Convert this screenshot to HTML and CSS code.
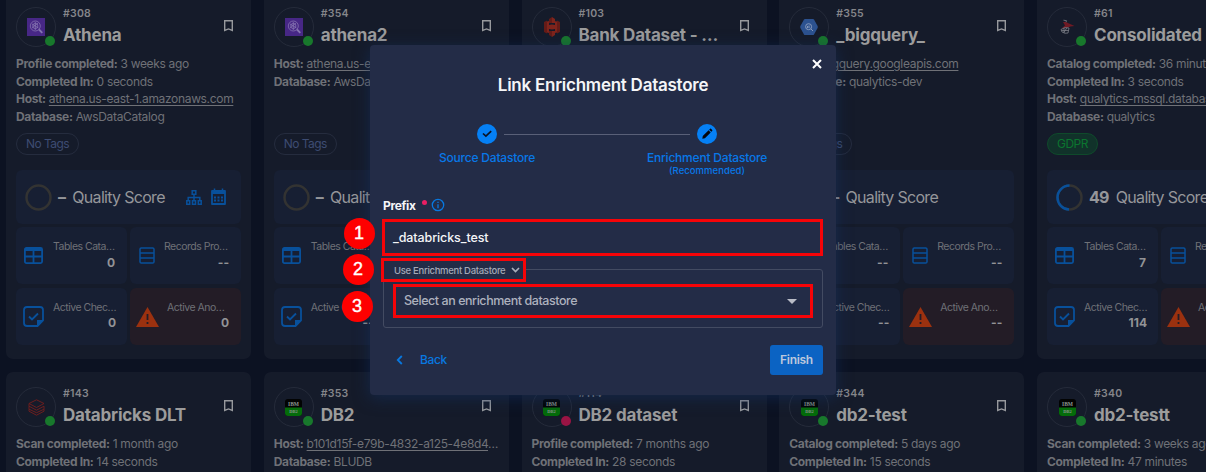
FILE: index.html
```html
<!DOCTYPE html>
<html lang="en">
<head>
<meta charset="utf-8">
<title>Datastores</title>
<link rel="stylesheet" href="styles.css">
</head>
<body>
<main class="grid" id="grid"></main>

<section class="modal" role="dialog">
  <svg class="close" viewBox="0 0 10 10"><path d="M1 1l8 8M9 1l-8 8"/></svg>
  <h2 class="modal-title">Link Enrichment Datastore</h2>
  <div class="stepper">
    <div class="step">
      <svg class="step-dot" viewBox="0 0 20 20"><circle cx="10" cy="10" r="10" fill="#0580f5"/><path d="M6 9.500l2.900 2.700 5.300-5" fill="none" stroke="#0c1222" stroke-width="1.700"/></svg>
      <span class="step-label">Source Datastore</span>
    </div>
    <div class="step-line"></div>
    <div class="step">
      <svg class="step-dot" viewBox="0 0 20 20"><circle cx="10" cy="10" r="10" fill="#0580f5"/><path d="M5.300 14.700l.5-2.600 5.800-5.800 2.100 2.100-5.800 5.800zM12.200 5.700l.9-.9q.5-.4.9 0l1.200 1.200q.4.400 0 .9l-.9.900z" fill="#05070d"/></svg>
      <span class="step-label">Enrichment Datastore</span>
      <span class="step-sub">(Recommended)</span>
    </div>
  </div>
  <div class="field-label"><span>Prefix</span><i class="required"></i>
    <svg class="info" viewBox="0 0 14 14"><circle cx="7" cy="7" r="5.700" fill="none" stroke="#0878e0" stroke-width="1.300"/><path d="M7 6.200v4M7 3.800v1.300" stroke="#0878e0" stroke-width="1.300"/></svg>
  </div>
  <div class="input">_databricks_test</div>
  <div class="fieldset">
    <div class="legend"><span>Use Enrichment Datastore</span><svg class="chev" viewBox="0 0 9 6"><path d="M1 1l3.500 3.500L8 1"/></svg></div>
    <div class="select"><span>Select an enrichment datastore</span><svg class="caret" viewBox="0 0 10 5"><path d="M0 0h10L5 5z"/></svg></div>
  </div>
  <div class="footer">
    <div class="back"><svg class="back-icon" viewBox="0 0 7 10"><path d="M5.800 1L1.800 5l4 4"/></svg><span>Back</span></div>
    <div class="finish">Finish</div>
  </div>
</section>

<div class="callout callout-1">1</div>
<div class="callout callout-2">2</div>
<div class="callout callout-3">3</div>
<script src="cards.js"></script>
</body>
</html>
```
FILE: styles.css
```css
* { box-sizing: border-box; }
html { overflow: hidden; }
body {
  margin: 0;
  width: 1206px;
  height: 472px;
  overflow: hidden;
  background: #0c1222;
  font-family: Inter, "Liberation Sans", sans-serif;
  position: relative;
}
svg { display: block; flex: none; }

.grid {
  display: grid;
  grid-template-columns: repeat(5, 245px);
  grid-auto-rows: 367px;
  gap: 13px 12.75px;
  margin: -8px 0 0 6px;
}
.card {
  background: #151b2a;
  border-radius: 7px;
  padding: 15px 10px;
  color: #6f7177;
  white-space: nowrap;
  overflow: hidden;
}
.head { display: flex; height: 40px; }
.avatar {
  position: relative;
  flex: none;
  width: 40px;
  height: 40px;
  border: 1px solid #252b3a;
  border-radius: 50%;
  display: grid;
  place-items: center;
}
.dot {
  position: absolute;
  left: 28px;
  top: 28px;
  width: 10px;
  height: 10px;
  border-radius: 50%;
  background: #18782c;
}
.dot-red { background: #9a1444; }
.names { margin-left: 7px; flex: 1; }
.num { font-size: 10.5px; line-height: 13px; font-weight: 600; color: #85868a; letter-spacing: 0.25px; }
.name { font-size: 17px; line-height: 22px; margin-top: 4px; font-weight: 700; color: #9c9c9c; letter-spacing: -0.2px; }
.bookmark { margin: 13px 8px 0 0; width: 9px; height: 12px; fill: none; stroke: #97999d; stroke-width: 1.4; }
.details {
  height: 78px;
  margin-top: 8px;
  font-size: 12px;
  line-height: 17.7px;
  letter-spacing: -0.33px;
}
.details b { font-weight: 700; }
.details a { text-decoration: underline; text-underline-offset: 2px; }
.tag {
  display: inline-block;
  height: 22px;
  line-height: 20px;
  padding: 0 9px;
  border: 1px solid #252c3e;
  border-radius: 11px;
  font-size: 12px;
  letter-spacing: -0.55px;
  color: #3d4c72;
  vertical-align: top;
}
.tag-green { background: #11322a; border-color: #0f4a2b; color: #0b752f; }
.score {
  display: flex;
  align-items: center;
  height: 54px;
  margin-top: 15px;
  padding: 0 15px 0 9px;
  border-radius: 6px;
  background: #171f33;
  color: #95969a;
  font-size: 16px;
  letter-spacing: -0.7px;
}
.ring { width: 27px; height: 27px; margin-right: 6px; }
.score-value { margin-right: 7px; font-weight: 700; }
.score-text { flex: 1; }
.tree { width: 16px; height: 15px; margin: 1px 9px 0 0; }
.cal { width: 15px; height: 17px; margin-bottom: 2px; }
.metrics {
  display: grid;
  grid-template-columns: 111px 111px;
  grid-auto-rows: 57px;
  gap: 4px 3px;
  margin-top: 3px;
}
.metric {
  display: flex;
  align-items: center;
  border-radius: 6px;
  background: #171f33;
  padding: 0 12px 0 7px;
}
.metric:first-child { padding-left: 8px; }
.metric-warn { background: #231c26; padding-left: 6px; }
.metric-records { padding-left: 9px; }
.metric-text { flex: 1; height: 57px; padding-top: 12px; }
.metric-label { font-size: 10.5px; line-height: 16px; letter-spacing: -0.5px; padding-left: 9px; }
.metric:first-child .metric-label { padding-left: 10px; }
.metric-warn .metric-label { padding-left: 8px; }
.metric-value { font-size: 12px; line-height: 16px; font-weight: 700; text-align: right; color: #929396; }
.metric:nth-child(n+3) .metric-value { margin-top: -1px; }
.blue { fill: none; stroke: #08509b; }

.modal {
  position: absolute;
  left: 370px;
  top: 45px;
  width: 466px;
  height: 350px;
  padding: 30px 13px 0;
  border-radius: 4px;
  background: #232c47;
  box-shadow: 0 3px 16px rgba(20, 48, 95, 0.6);
  color: #f4f5f7;
  white-space: nowrap;
}
.close { position: absolute; left: 442px; top: 14px; width: 10px; height: 10px; stroke: #fff; stroke-width: 2; }
.modal-title { margin: 0; font-size: 17px; line-height: 20px; font-weight: 600; text-align: center; letter-spacing: -0.25px; }
.stepper { display: flex; height: 74px; padding: 29px 0 0 94px; }
.step { width: 20px; display: flex; flex-direction: column; align-items: center; color: #0878e8; }
.step-dot { width: 20px; height: 20px; }
.step-label { margin-top: 6px; font-size: 12px; line-height: 16px; font-weight: 500; letter-spacing: -0.2px; }
.step-sub { font-size: 9.5px; line-height: 10px; font-weight: 500; letter-spacing: 0.05px; }
.step-line { width: 186px; height: 1px; margin: 10px 7px 0; background: #596078; }
.field-label { display: flex; align-items: center; height: 16px; margin-top: 28px; font-size: 12px; font-weight: 700; letter-spacing: -0.35px; }
.required { width: 5px; height: 5px; margin: -6px 4px 0 6px; border-radius: 50%; background: #e91e63; }
.info { width: 14px; height: 14px; }
.input {
  height: 37px;
  margin: 6px 0 0 -1px;
  border: 3px solid #f60408;
  padding-left: 8px;
  font-size: 12.5px;
  line-height: 31px;
  font-weight: 500;
  letter-spacing: -0.1px;
}
.fieldset { height: 59px; margin-top: 13px; border: 1px solid #434b62; border-radius: 3px; }
.legend {
  display: flex;
  align-items: center;
  width: 145px;
  height: 24px;
  margin: -12px 0 0 -3px;
  padding-left: 10px;
  border: 3px solid #f60408;
  background: #232c47;
  color: #a4a9b8;
  font-size: 9.5px;
  font-weight: 500;
  letter-spacing: -0.3px;
}
.chev { width: 9px; height: 6px; margin-left: 6px; fill: none; stroke: #a9aebb; stroke-width: 1.7; }
.select {
  display: flex;
  align-items: center;
  justify-content: space-between;
  width: 420px;
  height: 34px;
  margin: 2px 0 0 9px;
  padding: 0 13px 0 8px;
  border: 3px solid #f60408;
  color: #adb1be;
  font-size: 12.5px;
  font-weight: 500;
  letter-spacing: -0.45px;
}
.select span { padding-bottom: 2px; }
.caret { width: 10px; height: 5px; fill: #b9bcc7; }
.footer { display: flex; justify-content: space-between; margin-top: 17px; height: 30px; }
.back { display: flex; align-items: center; padding-left: 13px; color: #0878e0; font-size: 12px; font-weight: 500; letter-spacing: -0.4px; }
.back-icon { width: 7px; height: 10px; margin-right: 17px; fill: none; stroke: #0878e0; stroke-width: 1.8; }
.back span { padding-bottom: 1px; }
.finish { width: 53px; border-radius: 3px; background: #0b63c3; color: #bcc8dc; text-align: center; font-size: 12px; line-height: 30px; font-weight: 600; letter-spacing: -0.3px; }

.callout {
  position: absolute;
  width: 31px;
  height: 31px;
  border-radius: 50%;
  background: #fe0000;
  color: #fff;
  text-align: center;
  font: 18px/30px "Liberation Sans", Arial, sans-serif;
  -webkit-text-stroke: 0.4px #fff;
}
.callout-1 { left: 343.5px; top: 217.5px; }
.callout-2 { left: 342.5px; top: 253.5px; }
.callout-3 { left: 341.5px; top: 290.5px; }
```
FILE: cards.js
```js
const logos = {
  athena: '<svg width="18" height="18" viewBox="0 0 18 18"><rect width="18" height="18" fill="#472786"/><g fill="none" stroke="#8574b0" stroke-width=".8"><circle cx="8.300" cy="8" r="5"/><circle cx="8.300" cy="8" r="2.600"/><path d="M5 6l6.500 4M5 10l6-5M8.300 4v8"/><path d="M12 11.500l3.300 3.300" stroke-width="1.800"/></g></svg>',
  s3: '<svg width="16" height="20" viewBox="0 0 16 20"><path fill="#651b17" d="M0 5l3-1.500v13L0 15zM13 3.500L16 5v10l-3 1.500zM5 2l3-2v6H5zM5 14h3v6l-3-2z"/><path fill="#7f241c" d="M3 4.500l2-.5v12l-2-.5zM8 0l3 2v4H8zM8 14h3v4l-3 2zM11 4l2 .5v11l-2 .5zM5 8l3-.5v5L5 12zM8 7.500l3 .5v4l-3 .5z"/></svg>',
  bigquery: '<svg width="18" height="16" viewBox="0 0 18 16"><path fill="#2c5290" d="M5 0h8q.7 0 1 .6L17.600 7q.4 1 0 2L14 15.400q-.3.600-1 .6H5q-.7 0-1-.6L.4 9q-.4-1 0-2L4 .6Q4.300 0 5 0z"/><g fill="none" stroke="#8799bb"><circle cx="8.600" cy="7.700" r="3"/><path d="M7.500 7v2M9 6.500v2.500M11 10l2 2"/></g></svg>',
  mssql: '<svg width="16" height="16" viewBox="0 0 16 16"><path fill="#701a24" d="M4 3l3 0 3 1.500 5.500 2.500-4 .5-3 1-6 1 3.500-3z"/><g fill="none" stroke="#7b7e86" stroke-width=".8"><path d="M4.500 1.200l3 .5-.5 1.500M2 10.500q4-3 8-1.500l-1 5q-3 1-6-1zM5 8.800v5M8 8.500l-3 5M2.500 11.500h7"/></g></svg>',
  databricks: '<svg width="17" height="17" viewBox="0 0 17 17"><g fill="none" stroke="#751f1e" stroke-width=".9"><path d="M1 4.500L8.500.8 16 4.500 8.500 8.500zM1 4.500v2.700l7.500 4 7.500-4M1 7.200v3l7.500 3.500 7.500-3.500v-3M1 10.200v2l7.500 4 7.500-4v-2"/></g></svg>',
  db2: '<svg width="17" height="17" viewBox="0 0 17 17"><rect width="17" height="17" rx="3" fill="#020303"/><path fill="#046c0a" d="M0 8.500h17V14q0 3-3 3H3q-3 0-3-3z"/><g fill="#8b9490" font-family="Liberation Serif" font-weight="bold" text-anchor="middle"><text x="8.500" y="6.800" font-size="5.500">IBM</text><text x="8.500" y="14" font-size="4.500">DB2</text></g></svg>'
};
const bookmark = '<svg class="bookmark" viewBox="0 0 9 12"><path d="M.7.700h7.600v9.800L4.500 8.900.7 10.500z"/></svg>';
const tree = '<svg class="tree blue" viewBox="0 0 16 15" stroke-width="1.500"><path d="M6.200.800h3.600v3.500H6.200zM8 4.300v6M2.200 10.500V7.500h11.600v3M.8 10.700h2.900v3.500H.8zM6.500 10.700h3v3.500h-3zM12.300 10.700h2.900v3.500h-2.900z"/></svg>';
const cal = '<svg class="cal" viewBox="0 0 15 17"><g class="blue"><path d="M1 3h13v13H1z" stroke-width="1.800" stroke-linejoin="round"/><path d="M3.500.500V4M11.500.500V4" stroke-width="1.500"/><path d="M1 4.500h13" stroke-width="3"/><path d="M3 9.500h9M3 12.500h9" stroke-width="1.800" stroke-dasharray="2 1.500"/></g></svg>';
const icons = {
  tables: '<svg class="blue" width="19" height="17" viewBox="0 0 19 17" stroke-width="1.800"><rect x=".9" y=".9" width="17.200" height="15.200" rx="1.500"/><path d="M1 2.500h17" stroke-width="3"/><path d="M1 9.500h17M9.500 3v13"/></svg>',
  records: '<svg class="blue" width="16" height="17" viewBox="0 0 16 17" stroke-width="1.500"><rect x="1" y="1" width="14" height="15" rx="1.300"/><path d="M1 6h14M1 11h14"/></svg>',
  checks: '<svg class="blue" width="21" height="21" viewBox="0 0 21 21" stroke-width="1.800"><path d="M14.500 20H4q-3 0-3-3V4q0-3 3-3h13q3 0 3 3v10.500z"/><path d="M6 10.500l3 3 6-6" stroke-width="1.900"/><path d="M14 20v-6h6z" fill="#08509b" stroke="none"/></svg>',
  anomalies: '<svg width="23" height="20" viewBox="0 0 23 20"><path fill="#9b310f" d="M11.500 0L23 20H0z"/><path stroke="#231c26" stroke-width="1.800" d="M11.500 7v6M11.500 15v2"/></svg>'
};

function ring(percent) {
  const len = 2 * Math.PI * 12;
  const arc = percent
    ? `<circle cx="13.500" cy="13.500" r="12" stroke="#08509b" stroke-dasharray="${len * percent / 100} ${len}" transform="matrix(0 -1 -1 0 27 27)"/>`
    : '';
  return `<svg class="ring" viewBox="0 0 27 27" fill="none" stroke-width="2.500"><circle cx="13.500" cy="13.500" r="12" stroke="#333332"/>${arc}</svg>`;
}

function metric(kind, label, value, cls) {
  return `<div class="metric ${cls || ''}">${icons[kind]}<div class="metric-text"><div class="metric-label">${label}</div><div class="metric-value">${value}</div></div></div>`;
}

const cards = [
  { id: 308, name: 'Athena', logo: 'athena', rows: [['Profile completed', '3 weeks ago'], ['Completed In', '0 seconds'], ['Host', 'athena.us-east-1.amazonaws.com'], ['Database', 'AwsDataCatalog']], values: ['0', '--', '0', '0'], tools: true },
  { id: 354, name: 'athena2', logo: 'athena', rows: [['Host', 'athena.us-east-1.amazonaws.com'], ['Database', 'AwsDataCatalog']] },
  { id: 103, name: 'Bank Dataset - …', logo: 's3', rows: [] },
  { id: 355, name: '_bigquery_', logo: 'bigquery', rows: [['Host', 'bigquery.googleapis.com'], ['Database', 'qualytics-dev']] },
  { id: 61, name: 'Consolidated', logo: 'mssql', rows: [['Catalog completed', '36 minutes ago'], ['Completed In', '3 seconds'], ['Host', 'qualytics-mssql.database'], ['Database', 'qualytics']], tag: 'GDPR', score: 49, values: ['7', '--', '114', '--'] },
  { id: 143, name: 'Databricks DLT', logo: 'databricks', rows: [['Scan completed', '1 month ago'], ['Completed In', '14 seconds']] },
  { id: 353, name: 'DB2', logo: 'db2', rows: [['Host', 'b101d15f-e79b-4832-a125-4e8d4', '…'], ['Database', 'BLUDB']] },
  { id: 114, name: 'DB2 dataset', logo: 'db2', down: true, rows: [['Profile completed', '7 months ago'], ['Completed In', '28 seconds']] },
  { id: 344, name: 'db2-test', logo: 'db2', rows: [['Catalog completed', '5 days ago'], ['Completed In', '15 seconds']] },
  { id: 340, name: 'db2-testt', logo: 'db2', rows: [['Scan completed', '3 weeks ago'], ['Completed In', '47 minutes']] }
];

document.getElementById('grid').innerHTML = cards.map(c => {
  const v = c.values || ['--', '--', '--', '--'];
  const rows = c.rows.map(([k, t, more]) =>
    `<div><b>${k}:</b> ${k === 'Host' ? `<a>${t}</a>${more || ''}` : t}</div>`).join('');
  return `<article class="card">
    <div class="head">
      <div class="avatar">${logos[c.logo]}<i class="dot ${c.down ? 'dot-red' : ''}"></i></div>
      <div class="names"><div class="num">#${c.id}</div><div class="name">${c.name}</div></div>
      ${bookmark}
    </div>
    <div class="details">${rows}</div>
    <span class="tag ${c.tag ? 'tag-green' : ''}">${c.tag || 'No Tags'}</span>
    <div class="score">${ring(c.score)}<span class="score-value">${c.score || '–'}</span><span class="score-text">Quality Score</span>${c.tools ? tree + cal : ''}</div>
    <div class="metrics">
      ${metric('tables', 'Tables Cata…', v[0])}
      ${metric('records', 'Records Pro…', v[1], 'metric-records')}
      ${metric('checks', 'Active Chec…', v[2])}
      ${metric('anomalies', 'Active Ano…', v[3], 'metric-warn')}
    </div>
  </article>`;
}).join('');
```
